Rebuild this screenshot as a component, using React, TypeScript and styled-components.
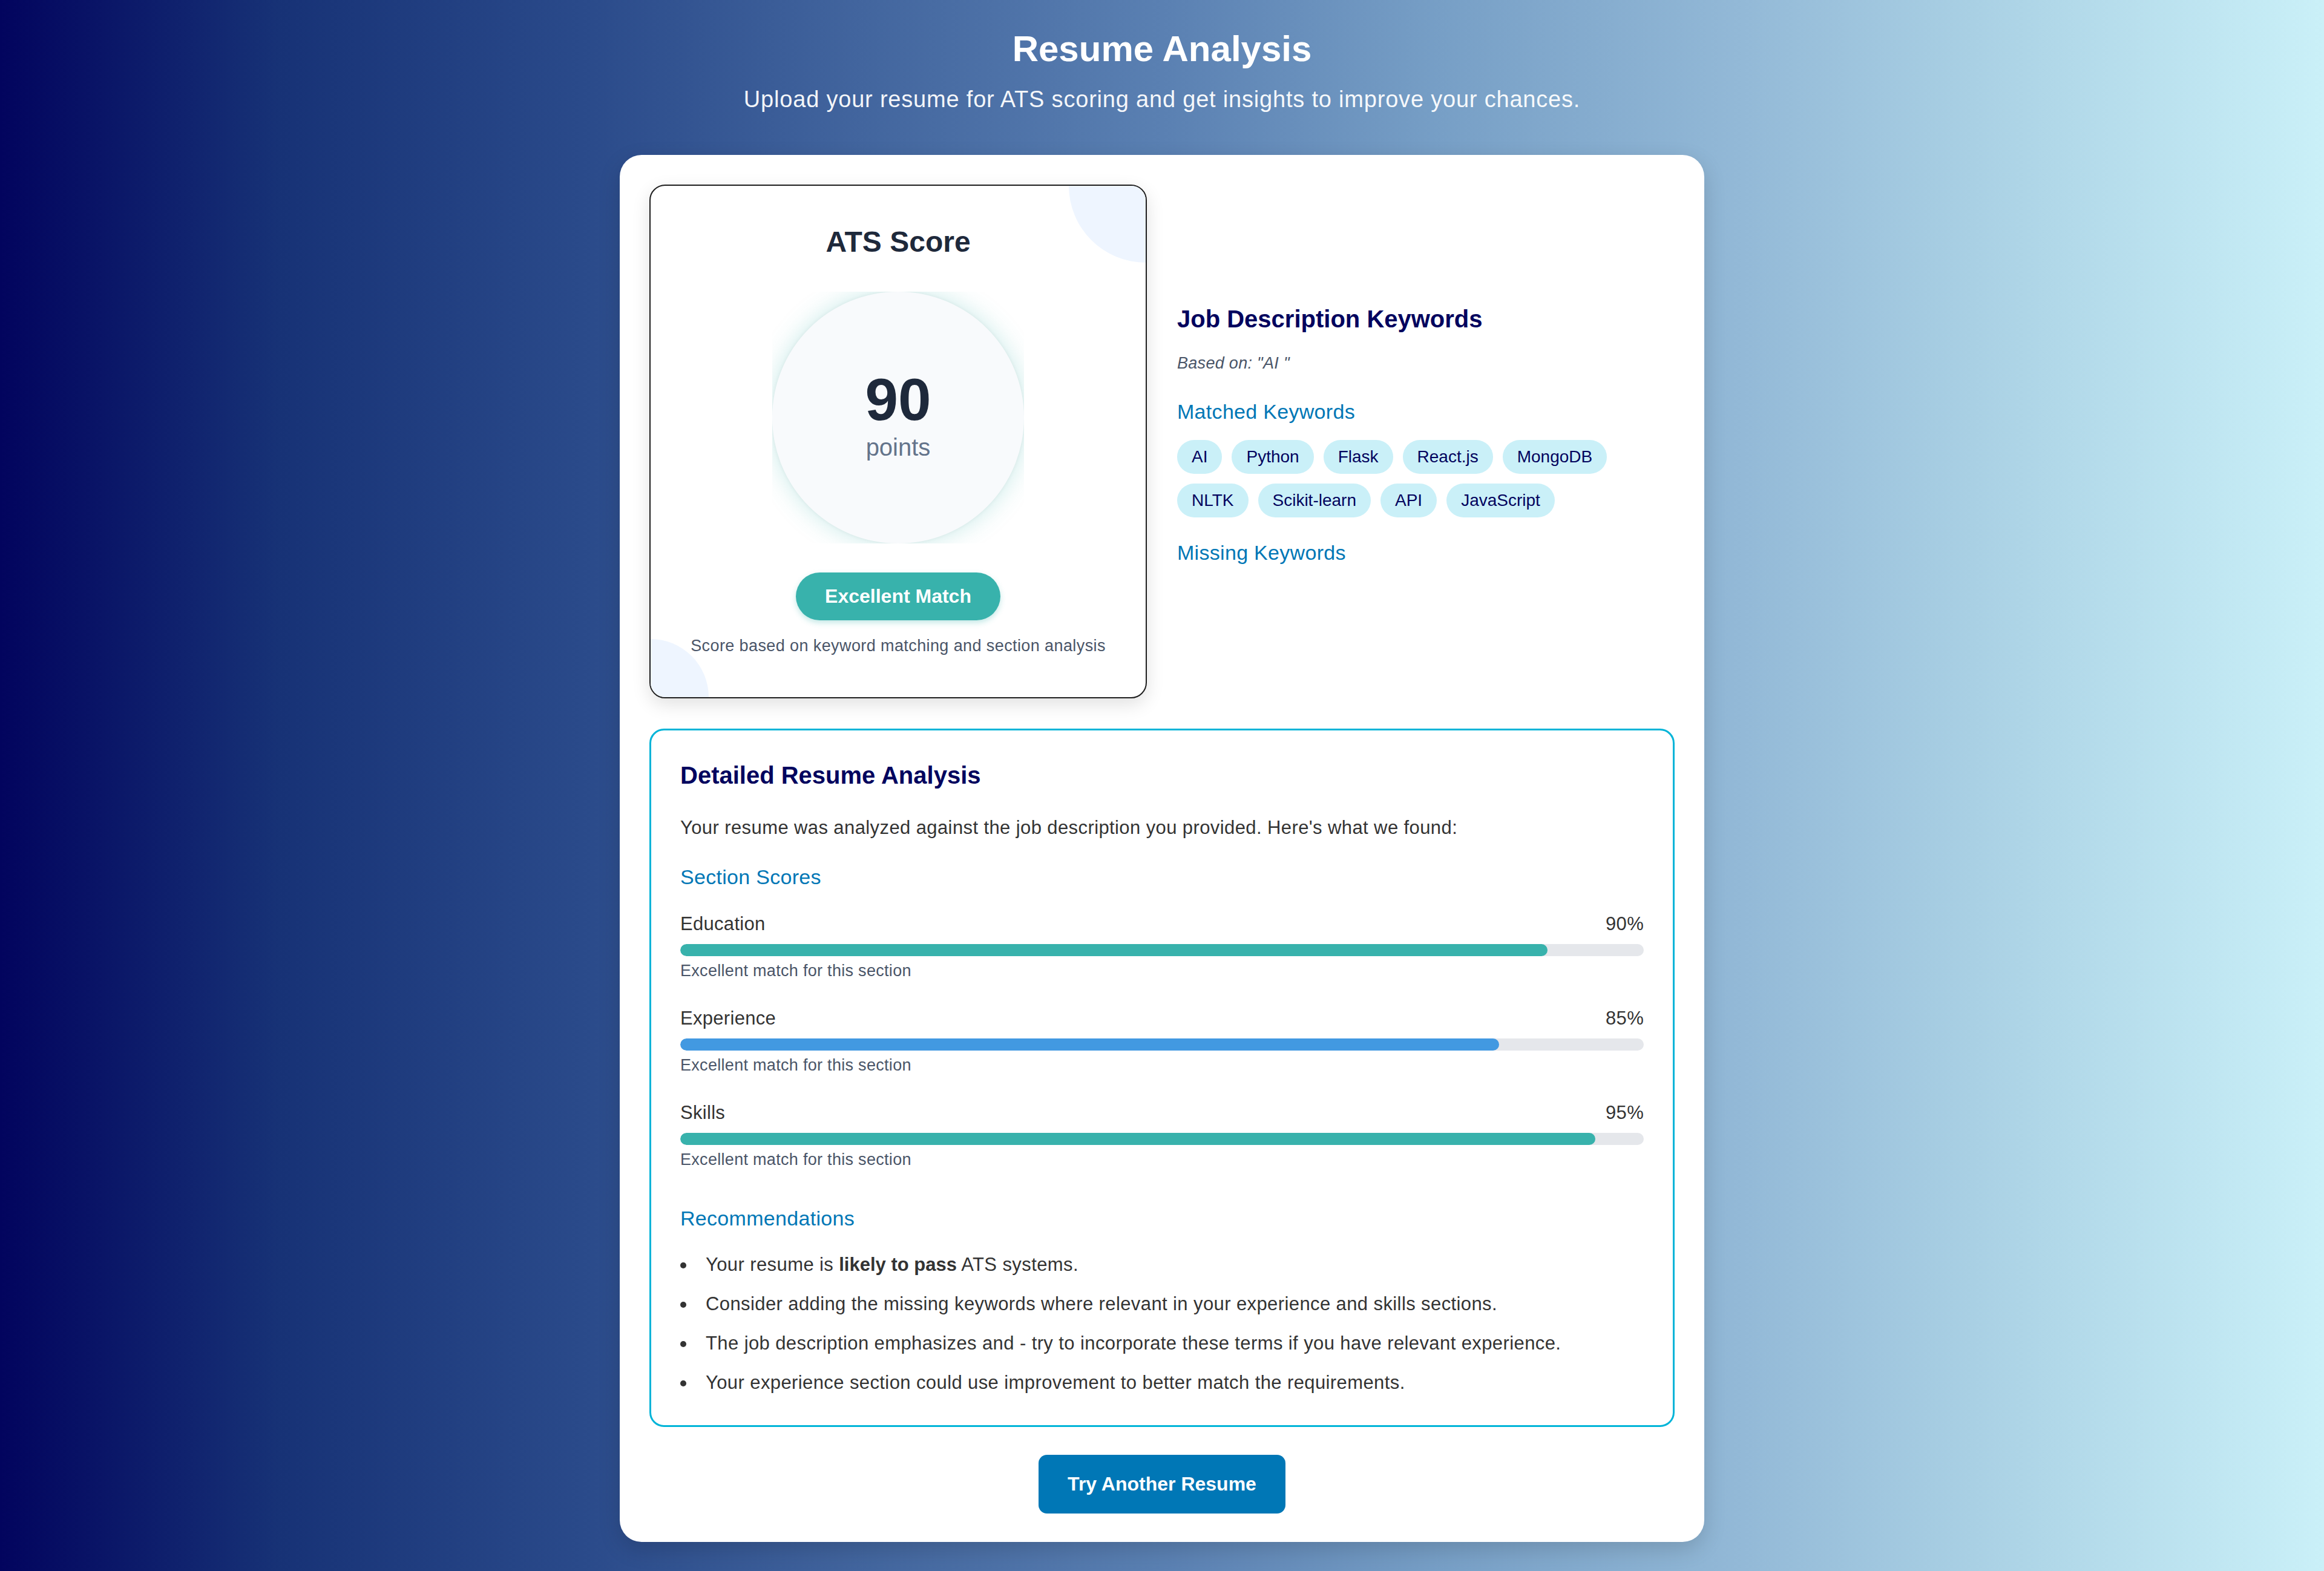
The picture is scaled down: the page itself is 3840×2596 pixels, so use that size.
import React from "react";
import styled, { createGlobalStyle } from "styled-components";

const GlobalStyle = createGlobalStyle`
  html, body {
    margin: 0;
    padding: 0;
  }
  body {
    font-family: "Liberation Sans", Arial, Helvetica, sans-serif;
    background: #03045e;
  }
  * { box-sizing: border-box; }
`;

const Page = styled.div`
  min-height: 100vh;
  padding: 46px 0 48px;
  background: linear-gradient(
    90deg,
    #02045e 0%,
    #173276 12%,
    #2a4a8a 25%,
    #42659e 37%,
    #5a80b2 50%,
    #779fc6 62%,
    #93b9d7 75%,
    #b0d7e8 88%,
    #caf0f8 100%
  );
  display: flex;
  flex-direction: column;
  align-items: center;
`;

const Header = styled.header`
  display: flex;
  flex-direction: column;
  align-items: center;
  color: #ffffff;
`;

const PageTitle = styled.h1`
  margin: 0;
  font-size: 60px;
  line-height: 69px;
  font-weight: 700;
`;

const PageSubtitle = styled.p`
  margin: 27px 0 0;
  font-size: 38px;
  line-height: 44px;
  letter-spacing: 0.8px;
  color: rgba(255, 255, 255, 0.96);
`;

const Card = styled.main`
  width: 1792px;
  margin-top: 70px;
  padding: 49px 49px 47px;
  background: #ffffff;
  border-radius: 36px;
  box-shadow: 0 12px 36px rgba(0, 0, 0, 0.15);
`;

const TopGrid = styled.section`
  display: grid;
  grid-template-columns: 1fr 1fr;
  gap: 50px;
`;

const ScoreCard = styled.div`
  position: relative;
  overflow: hidden;
  border: 2px solid #1f1f1f;
  border-radius: 26px;
  padding: 65px 40px 69px;
  display: flex;
  flex-direction: column;
  align-items: center;
  background: #ffffff;
  box-shadow: 0 10px 30px rgba(0, 0, 0, 0.12);

  &::before,
  &::after {
    content: "";
    position: absolute;
    border-radius: 50%;
    background: #eef5ff;
    z-index: 0;
  }
  &::before {
    width: 254px;
    height: 254px;
    top: -127px;
    right: -127px;
  }
  &::after {
    width: 192px;
    height: 192px;
    bottom: -96px;
    left: -96px;
  }
  & > * {
    position: relative;
    z-index: 1;
  }
`;

const ScoreTitle = styled.h2`
  margin: 0;
  font-size: 48px;
  line-height: 55px;
  font-weight: 700;
  color: #1e293b;
`;

const RingFrame = styled.div`
  width: 416px;
  height: 416px;
  margin-top: 55px;
  overflow: hidden;
`;

const Ring = styled.div`
  width: 100%;
  height: 100%;
  border-radius: 50%;
  background: #f8fafc;
  box-shadow: 0 0 40px rgba(56, 178, 172, 0.28), 0 0 6px rgba(0, 0, 0, 0.06);
  display: flex;
  flex-direction: column;
  align-items: center;
  justify-content: center;
  padding-bottom: 8px;
`;

const ScoreValue = styled.div`
  font-size: 98px;
  line-height: 100px;
  font-weight: 700;
  color: #1e293b;
`;

const ScoreUnit = styled.div`
  margin-top: 6px;
  font-size: 40px;
  line-height: 46px;
  color: #64748b;
`;

const MatchPill = styled.div`
  margin-top: 48px;
  height: 79px;
  padding: 0 48px;
  border-radius: 40px;
  background: #38b2ac;
  color: #ffffff;
  font-size: 32px;
  font-weight: 700;
  display: flex;
  align-items: center;
  box-shadow: 0 4px 10px rgba(56, 178, 172, 0.3);
`;

const ScoreNote = styled.p`
  margin: 27px 0 0;
  font-size: 27px;
  line-height: 31px;
  letter-spacing: 0.4px;
  color: #4a5568;
`;

const KeywordsColumn = styled.div`
  align-self: center;
  display: flex;
  flex-direction: column;
  padding-top: 4px;
`;

const NavyHeading = styled.h3`
  margin: 0;
  font-size: 40px;
  line-height: 46px;
  font-weight: 700;
  color: #03045e;
`;

const BasedOn = styled.p`
  margin: 35px 0 0;
  font-size: 27px;
  line-height: 30px;
  letter-spacing: 0.3px;
  font-style: italic;
  color: #4a5568;
`;

const BlueHeading = styled.h4<{ $gap: number }>`
  margin: ${(p) => p.$gap}px 0 0;
  font-size: 34px;
  line-height: 39px;
  letter-spacing: 0.3px;
  font-weight: 400;
  color: #0077b6;
`;

const ChipList = styled.div`
  margin-top: 27px;
  display: flex;
  flex-wrap: wrap;
  gap: 16px;
`;

const Chip = styled.span`
  height: 56px;
  padding: 0 24px;
  border-radius: 28px;
  background: #caf0f8;
  color: #03045e;
  font-size: 28px;
  display: inline-flex;
  align-items: center;
`;

const AnalysisBox = styled.section`
  margin-top: 50px;
  border: 3px solid #00b4d8;
  border-radius: 24px;
  padding: 51px 48px 52px;
`;

const BodyText = styled.p`
  margin: 46px 0 0;
  font-size: 31px;
  line-height: 36px;
  letter-spacing: 0.4px;
  color: #333333;
`;

const ScoreList = styled.div`
  margin-top: 40px;
  display: flex;
  flex-direction: column;
  gap: 45px;
`;

const ScoreRow = styled.div`
  display: flex;
  flex-direction: column;
`;

const RowHeader = styled.div`
  display: flex;
  justify-content: space-between;
  font-size: 31px;
  line-height: 36px;
  letter-spacing: 0.3px;
  color: #333333;
`;

const Track = styled.div`
  margin-top: 15px;
  height: 20px;
  border-radius: 10px;
  background: #e5e7eb;
  overflow: hidden;
`;

const Fill = styled.div<{ $color: string }>`
  height: 100%;
  border-radius: 10px;
  background: ${(p) => p.$color};
`;

const RowNote = styled.div`
  margin-top: 9px;
  font-size: 27px;
  line-height: 31px;
  letter-spacing: 0.3px;
  color: #4a5568;
`;

const RecList = styled.ul`
  margin: 39px 0 0;
  padding: 0;
  list-style: none;
  display: flex;
  flex-direction: column;
  gap: 29px;
`;

const RecItem = styled.li`
  position: relative;
  padding-left: 42px;
  font-size: 31px;
  line-height: 36px;
  letter-spacing: 0.4px;
  color: #333333;

  &::before {
    content: "";
    position: absolute;
    left: 0;
    top: 14px;
    width: 10px;
    height: 10px;
    border-radius: 50%;
    background: #333333;
  }

  strong {
    font-weight: 700;
    letter-spacing: 0;
  }
`;

const Actions = styled.div`
  margin-top: 46px;
  display: flex;
  justify-content: center;
`;

const PrimaryButton = styled.button`
  height: 97px;
  padding: 0 48px;
  border: none;
  border-radius: 14px;
  background: #0077b6;
  color: #ffffff;
  font-family: "Liberation Sans", Arial, sans-serif;
  font-size: 32px;
  font-weight: 700;
  cursor: pointer;
`;

const matched = ["AI", "Python", "Flask", "React.js", "MongoDB", "NLTK", "Scikit-learn", "API", "JavaScript"];

const sections = [
  { name: "Education", score: 90, color: "#38b2ac" },
  { name: "Experience", score: 85, color: "#4299e1" },
  { name: "Skills", score: 95, color: "#38b2ac" },
];

export default function App() {
  return (
    <>
      <GlobalStyle />
      <Page>
        <Header>
          <PageTitle>Resume Analysis</PageTitle>
          <PageSubtitle>Upload your resume for ATS scoring and get insights to improve your chances.</PageSubtitle>
        </Header>
        <Card>
          <TopGrid>
            <ScoreCard>
              <ScoreTitle>ATS Score</ScoreTitle>
              <RingFrame>
                <Ring>
                  <ScoreValue>90</ScoreValue>
                  <ScoreUnit>points</ScoreUnit>
                </Ring>
              </RingFrame>
              <MatchPill>Excellent Match</MatchPill>
              <ScoreNote>Score based on keyword matching and section analysis</ScoreNote>
            </ScoreCard>
            <KeywordsColumn>
              <NavyHeading>Job Description Keywords</NavyHeading>
              <BasedOn>Based on: "AI "</BasedOn>
              <BlueHeading $gap={46}>Matched Keywords</BlueHeading>
              <ChipList>
                {matched.map((k) => (
                  <Chip key={k}>{k}</Chip>
                ))}
              </ChipList>
              <BlueHeading $gap={39}>Missing Keywords</BlueHeading>
              <ChipList />
            </KeywordsColumn>
          </TopGrid>

          <AnalysisBox>
            <NavyHeading>Detailed Resume Analysis</NavyHeading>
            <BodyText>Your resume was analyzed against the job description you provided. Here's what we found:</BodyText>
            <BlueHeading $gap={44}>Section Scores</BlueHeading>
            <ScoreList>
              {sections.map((s) => (
                <ScoreRow key={s.name}>
                  <RowHeader>
                    <span>{s.name}</span>
                    <span>{s.score}%</span>
                  </RowHeader>
                  <Track>
                    <Fill $color={s.color} style={{ width: `${s.score}%` }} />
                  </Track>
                  <RowNote>Excellent match for this section</RowNote>
                </ScoreRow>
              ))}
            </ScoreList>
            <BlueHeading $gap={62}>Recommendations</BlueHeading>
            <RecList>
              <RecItem>
                Your resume is <strong>likely to pass</strong> ATS systems.
              </RecItem>
              <RecItem>Consider adding the missing keywords where relevant in your experience and skills sections.</RecItem>
              <RecItem>The job description emphasizes and - try to incorporate these terms if you have relevant experience.</RecItem>
              <RecItem>Your experience section could use improvement to better match the requirements.</RecItem>
            </RecList>
          </AnalysisBox>

          <Actions>
            <PrimaryButton>Try Another Resume</PrimaryButton>
          </Actions>
        </Card>
      </Page>
    </>
  );
}
